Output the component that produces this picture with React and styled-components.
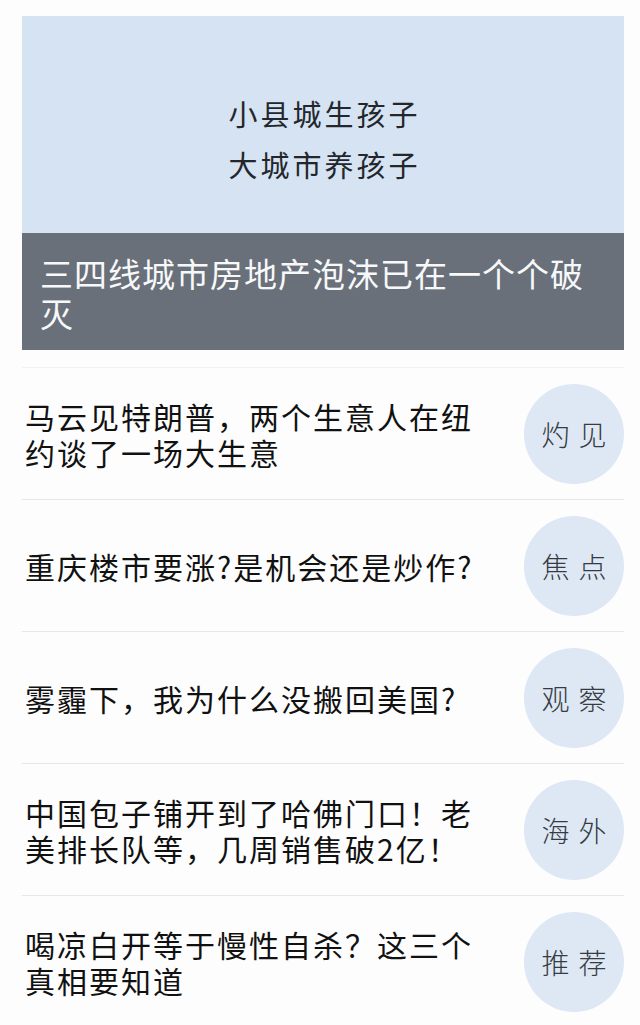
import styled, { createGlobalStyle } from "styled-components";

let GlobalStyle = createGlobalStyle`
  * {
    box-sizing: border-box;
  }
  body {
    margin: 0;
    background-color: #fdfdfe;
    font-family: "Noto Sans CJK SC", "Noto Sans", sans-serif;
  }
`;

let Page = styled.div`
  width: 640px;
  padding: 16px 16px 0 22px;
  overflow: hidden;
`;

let Cover = styled.div`
  width: 602px;
  display: flex;
  flex-direction: column;
`;

let Poster = styled.div`
  height: 217px;
  background-color: #d5e3f2;
  padding-top: 72px;
  display: flex;
  flex-direction: column;
  align-items: center;
`;

let PosterLine = styled.div`
  font-size: 29px;
  line-height: 51px;
  letter-spacing: 3px;
  padding-left: 3px;
  color: #23272b;
`;

let Caption = styled.h2`
  margin: 0;
  height: 117px;
  padding: 20px 30px 17px 18px;
  background-color: #6a7079;
  color: #f7f8f9;
  font-size: 33px;
  font-weight: 400;
  line-height: 40px;
  letter-spacing: 1px;
`;

let List = styled.ul`
  list-style: none;
  margin: 17px 0 0;
  padding: 0;
  width: 602px;
`;

let Item = styled.li`
  height: 132px;
  border-top: 1px solid ${(props) => (props.$first ? "#eef2f5" : "#e3e7eb")};
  padding-left: 3px;
  display: flex;
  align-items: center;
  gap: 34px;
`;

let Headline = styled.div`
  flex: 1;
  font-size: 30px;
  font-weight: 400;
  line-height: 36px;
  letter-spacing: 2px;
  color: #111;
`;

let Tag = styled.div`
  flex: 0 0 100px;
  width: 100px;
  height: 100px;
  border-radius: 50%;
  background-color: #dde8f4;
  display: flex;
  align-items: center;
  justify-content: center;
  font-size: 28px;
  font-weight: 300;
  letter-spacing: 9px;
  padding-left: 9px;
  color: #363b41;
`;

let news = [
  { title: "马云见特朗普，两个生意人在纽约谈了一场大生意", tag: "灼见" },
  { title: "重庆楼市要涨?是机会还是炒作?", tag: "焦点" },
  { title: "雾霾下，我为什么没搬回美国?", tag: "观察" },
  { title: "中国包子铺开到了哈佛门口！老美排长队等，几周销售破2亿！", tag: "海外" },
  { title: "喝凉白开等于慢性自杀？这三个真相要知道", tag: "推荐" },
];

export default function App() {
  return (
    <Page>
      <GlobalStyle />
      <Cover>
        <Poster>
          <PosterLine>小县城生孩子</PosterLine>
          <PosterLine>大城市养孩子</PosterLine>
        </Poster>
        <Caption>三四线城市房地产泡沫已在一个个破灭</Caption>
      </Cover>
      <List>
        {news.map((item, i) => (
          <Item key={item.tag} $first={i === 0}>
            <Headline>{item.title}</Headline>
            <Tag>{item.tag}</Tag>
          </Item>
        ))}
      </List>
    </Page>
  );
}
